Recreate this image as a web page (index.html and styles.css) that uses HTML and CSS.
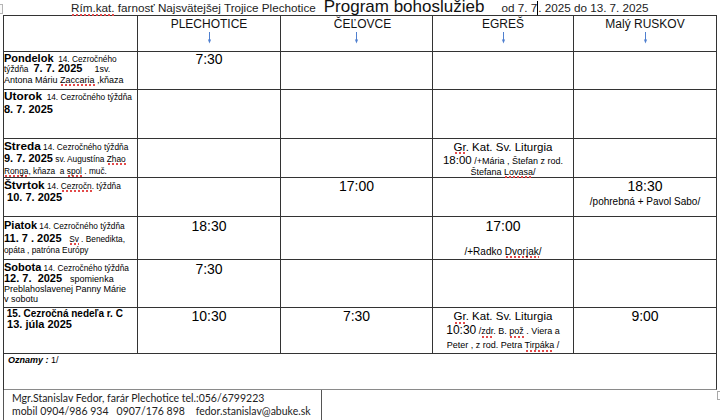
FILE: index.html
```html
<!DOCTYPE html>
<html lang="sk">
<head>
<meta charset="utf-8">
<title>Program bohoslužieb</title>
<link rel="stylesheet" href="styles.css">
</head>
<body>
<div class="page">
  <span class="handle-tl"></span>
  <div class="title"><span class="t-parish"><u class="sp">Rím.kat.</u> farnosť Najsvätejšej Trojice Plechotice</span><span class="t-main">Program bohoslužieb</span><span class="t-date">od 7. 7<span class="cur"></span>. 2025 do 13. 7. 2025</span></div>

  <div class="sched">
    <!-- header -->
    <div class="c"></div>
    <div class="c ctr pt2"><div class="ln h14"><span class="hdr">PLECHOTICE</span></div><svg class="arr" width="7" height="12" viewBox="0 0 7 12"><path d="M3.5 0V8.5" stroke="#4f7fcf" stroke-width="1"/><path d="M1.9 7.6L3.5 11.6L5.1 7.6Z" fill="#4f7fcf"/></svg></div>
    <div class="c ctr pt2"><div class="ln h14 shift"><span class="hdr">ČEĽOVCE</span></div><svg class="arr" width="7" height="12" viewBox="0 0 7 12"><path d="M3.5 0V8.5" stroke="#4f7fcf" stroke-width="1"/><path d="M1.9 7.6L3.5 11.6L5.1 7.6Z" fill="#4f7fcf"/></svg></div>
    <div class="c ctr pt2"><div class="ln h14"><span class="hdr">EGREŠ</span></div><svg class="arr" width="7" height="12" viewBox="0 0 7 12"><path d="M3.5 0V8.5" stroke="#4f7fcf" stroke-width="1"/><path d="M1.9 7.6L3.5 11.6L5.1 7.6Z" fill="#4f7fcf"/></svg></div>
    <div class="c ctr pt2"><div class="ln h14"><span class="hdr">Malý RUSKOV</span></div><svg class="arr" width="7" height="12" viewBox="0 0 7 12"><path d="M3.5 0V8.5" stroke="#4f7fcf" stroke-width="1"/><path d="M1.9 7.6L3.5 11.6L5.1 7.6Z" fill="#4f7fcf"/></svg></div>

    <!-- Pondelok -->
    <div class="c pt1h">
      <div class="ln h10h"><b class="d">Pondelok</b><span class="s8"> &nbsp;14. Cezročného</span></div>
      <div class="ln h10h"><span class="s8">týždňa</span><b class="d ml5">7. 7. 2025</b><span class="s9 ml12">1sv.</span></div>
      <div class="ln h10h"><span class="s9">Antona Máriu <u class="sp">Zaccaria</u> ,kňaza</span></div>
    </div>
    <div class="c ctr pt2"><div class="ln h14"><span class="tm">7:30</span></div></div>
    <div class="c"></div>
    <div class="c"></div>
    <div class="c"></div>

    <!-- Utorok -->
    <div class="c">
      <div class="ln h13"><b class="d12">Utorok</b><span class="s8"> &nbsp;14. Cezročného týždňa</span></div>
      <div class="ln h13"><b class="d">8. 7. 2025</b></div>
    </div>
    <div class="c"></div>
    <div class="c"></div>
    <div class="c"></div>
    <div class="c"></div>

    <!-- Streda -->
    <div class="c pt1h">
      <div class="ln h12"><b class="d12">Streda</b><span class="s8"> 14. Cezročného týždňa</span></div>
      <div class="ln h12"><b class="d">9. 7. 2025</b><span class="s8"> sv. Augustína <u class="sp">Zhao</u></span></div>
      <div class="ln h11"><span class="s8"><u class="sp">Ronga</u>, kňaza &nbsp;a <u class="sp">spol</u> . muč.</span></div>
    </div>
    <div class="c"></div>
    <div class="c"></div>
    <div class="c ctr pt1h">
      <div class="ln h13"><span class="t115"><u class="sp">Gr</u>. Kat. Sv. Liturgia</span></div>
      <div class="ln h13"><span class="t115">18:00</span><span class="s9"> /+Mária , Štefan z rod.</span></div>
      <div class="ln h9"><span class="s9">Štefana <u class="sp">Lovasa</u>/</span></div>
    </div>
    <div class="c"></div>

    <!-- Štvrtok -->
    <div class="c pt1h">
      <div class="ln h12"><b class="d12">Štvrtok</b><span class="s8"> 14. <u class="sp">Cezročn</u>. týždňa</span></div>
      <div class="ln h12"><b class="d">&nbsp;10. 7. 2025</b></div>
    </div>
    <div class="c"></div>
    <div class="c ctr pt2h"><div class="ln h14"><span class="tm">17:00</span></div></div>
    <div class="c"></div>
    <div class="c ctr pt2h">
      <div class="ln h14"><span class="tm">18:30</span></div>
      <div class="ln h13"><span class="s10">/pohrebná + Pavol Sabo/</span></div>
    </div>

    <!-- Piatok -->
    <div class="c pt1h">
      <div class="ln h13"><b class="d">Piatok</b><span class="s8"> 14. Cezročného týždňa</span></div>
      <div class="ln h13"><b class="d">11. 7 . 2025</b><span class="s8 ml3"> &nbsp;<u class="sp">Sv</u> . Benedikta,</span></div>
      <div class="ln h10"><span class="s8">opáta , patróna Európy</span></div>
    </div>
    <div class="c ctr pt3h"><div class="ln h14"><span class="tm">18:30</span></div></div>
    <div class="c"></div>
    <div class="c ctr pt3h">
      <div class="ln h14"><span class="tm">17:00</span></div>
      <div class="gap10"></div>
      <div class="ln h14"><span class="s10">/+Radko <u class="sp">Dvorjak</u>/</span></div>
    </div>
    <div class="c"></div>

    <!-- Sobota -->
    <div class="c pt3">
      <div class="ln h10h"><b class="d">Sobota</b><span class="s8"> 14. Cezročného týždňa</span></div>
      <div class="ln h10h"><b class="d">12. 7. &nbsp;2025</b><span class="s9 ml3"> &nbsp;spomienka</span></div>
      <div class="ln h10"><span class="s9">Preblahoslavenej Panny Márie</span></div>
      <div class="ln h9"><span class="s9">v sobotu</span></div>
    </div>
    <div class="c ctr pt3h"><div class="ln h14"><span class="tm">7:30</span></div></div>
    <div class="c"></div>
    <div class="c"></div>
    <div class="c"></div>

    <!-- Nedeľa -->
    <div class="c">
      <div class="ln h11"><b class="n10">&nbsp;15. Cezročná nedeľa r. C</b></div>
      <div class="ln h12"><b class="d">&nbsp;13. júla 2025</b></div>
    </div>
    <div class="c ctr pt3"><div class="ln h14"><span class="tm">10:30</span></div></div>
    <div class="c ctr pt3"><div class="ln h14"><span class="tm">7:30</span></div></div>
    <div class="c ctr pt2">
      <div class="ln h14"><span class="t115"><u class="sp">Gr</u>. Kat. Sv. Liturgia</span></div>
      <div class="ln h14"><span class="t12">10:30</span><span class="s9"> /<u class="sp">zdr</u>. B. <u class="sp">pož</u> . Viera a</span></div>
      <div class="ln h14"><span class="s9">Peter , z rod. Petra <u class="sp">Tirpáka</u> /</span></div>
    </div>
    <div class="c ctr pt3"><div class="ln h14"><span class="tm">9:00</span></div></div>

    <!-- Oznamy -->
    <div class="c oz">
      <div class="ln h12"><b class="ozb">Oznamy :</b><span class="s9"> 1/</span></div>
    </div>
  </div>

  <div class="foot">
    <div class="ln h13"><span class="ft">Mgr.Stanislav Fedor, farár Plechotice tel.:056/6799223</span></div>
    <div class="ln h13"><span class="ft">mobil 0904/986 934   0907/176 898    fedor.stanislav@abuke.sk</span></div>
  </div>
  <span class="handle-br"></span>
</div>
</body>
</html>
```

FILE: styles.css
```css
* { box-sizing: border-box; }
html, body { margin: 0; padding: 0; background: #fff; }
body {
  width: 720px;
  height: 420px;
  overflow: hidden;
  font-family: "Liberation Sans", Arial, sans-serif;
  color: #000;
}
.page { position: relative; width: 720px; height: 420px; }

/* table handles (overlay) */
.handle-tl {
  position: absolute; left: -6px; top: 4px;
  width: 9px; height: 10px;
  border: 1px solid #b5b5b5; background: #fafafa;
}
.handle-br {
  position: absolute; left: 717px; top: 391px;
  width: 7px; height: 9px;
  border: 1px solid #a8a8a8; background: #fff;
}

/* title line */
.title {
  height: 15px;
  line-height: 18px;
  font-size: 10px;
  padding-left: 71px;
  white-space: nowrap;
}
.title span { line-height: 0; }
.t-parish { font-size: 11.7px; color: #222; }
.t-main { font-size: 17px; margin-left: 8px; color: #111; }
.t-date { font-size: 11.7px; margin-left: 17px; color: #222; }
.cur {
  display: inline-block;
  width: 1px; height: 14px;
  background: #000;
  vertical-align: -2.5px;
}

/* schedule grid */
.sched {
  margin-left: 3px;
  width: 714px;
  display: grid;
  grid-template-columns: 134px 143px 152px 141px 143px;
  grid-template-rows: 36px 38px 49px 39px 39px 43px 48px 46px 36px;
  border-left: 1px solid #333;
  border-top: 1px solid #333;
}
.c {
  border-right: 1px solid #333;
  border-bottom: 1px solid #333;
  min-width: 0;
}
.ctr { text-align: center; }
.oz { grid-column: 1 / -1; padding-left: 4px; border-bottom-color: #8a8a8a; }

.pt1h { padding-top: 1.5px; }
.pt2 { padding-top: 2px; }
.pt2h { padding-top: 2.5px; }
.pt3 { padding-top: 3px; }
.pt3h { padding-top: 3.5px; }

.ln { font-size: 10px; white-space: pre; }
.ln span, .ln b { line-height: 0; }
.h9 { height: 9px; line-height: 9px; }
.h10 { height: 10px; line-height: 10px; }
.h10h { height: 10.5px; line-height: 10.5px; }
.h11 { height: 11px; line-height: 11px; }
.h12 { height: 12px; line-height: 12px; }
.h13 { height: 13px; line-height: 13px; }
.h14 { height: 14px; line-height: 14px; }
.gap10 { height: 10px; }
.shift { padding-left: 12px; }

.ml3 { margin-left: 3px; }
.ml5 { margin-left: 5px; }
.ml12 { margin-left: 12px; }

.hdr { font-size: 12px; color: #111; }
.arr { display: block; margin: 0 auto; }

.d { font-size: 11px; font-weight: bold; }
.d12 { font-size: 11.8px; font-weight: bold; }
.n10 { font-size: 10px; font-weight: bold; }
.s8 { font-size: 8.3px; }
.s9 { font-size: 9px; }
.s10 { font-size: 10px; }
.tm { font-size: 14px; }
.t115 { font-size: 11.5px; }
.t12 { font-size: 12px; }
.ozb { font-size: 9px; font-weight: bold; font-style: italic; }

/* spell-check squiggle, painted as a zigzag under the word */
u.sp {
  text-decoration: none;
  padding-bottom: 1.5px;
  background-image:
    linear-gradient(45deg, transparent 40%, #e34a4a 40%, #e34a4a 60%, transparent 60%),
    linear-gradient(-45deg, transparent 40%, #e34a4a 40%, #e34a4a 60%, transparent 60%);
  background-size: 4px 2px;
  background-repeat: repeat-x;
  background-position: left bottom;
}

/* footer box */
.foot {
  margin-left: 3px;
  width: 319px;
  height: 30px;
  border-left: 1px solid #555;
  border-right: 1px solid #555;
  padding: 1.5px 0 0 8px;
  font-family: Lato, "Open Sans", sans-serif;
  color: #222;
}
.foot .ln { font-size: 10px; }
.ft { font-size: 10.5px; }
```
